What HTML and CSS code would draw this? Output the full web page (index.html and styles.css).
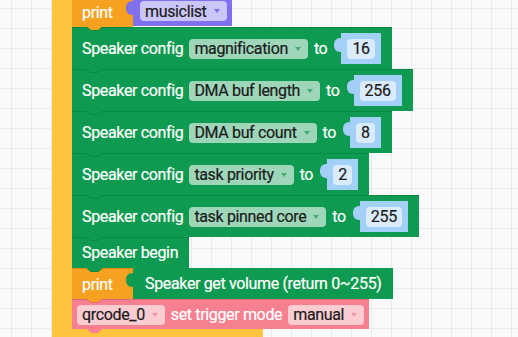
FILE: index.html
```html
<!DOCTYPE html>
<html lang="en">
<head>
  <meta charset="UTF-8">
  <meta name="viewport" content="width=device-width, initial-scale=1.0">
  <title>Speaker blocks</title>
  <link rel="stylesheet" href="styles.css">
</head>
<body>
  <div class="workspace">
    <div class="c-block">
      <div class="c-stack">
        <!-- print musiclist -->
        <div class="row">
          <div class="block stmt print">print</div>
          <div class="block value purple">
            <span class="dropdown">musiclist<i class="arrow"></i></span>
          </div>
        </div>

        <div class="block stmt speaker">
          <span class="label">Speaker config</span>
          <span class="dropdown">magnification<i class="arrow"></i></span>
          <span class="label">to</span>
          <span class="block value num"><span class="field">16</span></span>
        </div>
        <div class="block stmt speaker">
          <span class="label">Speaker config</span>
          <span class="dropdown">DMA buf length<i class="arrow"></i></span>
          <span class="label">to</span>
          <span class="block value num"><span class="field">256</span></span>
        </div>
        <div class="block stmt speaker">
          <span class="label">Speaker config</span>
          <span class="dropdown">DMA buf count<i class="arrow"></i></span>
          <span class="label">to</span>
          <span class="block value num"><span class="field">8</span></span>
        </div>
        <div class="block stmt speaker">
          <span class="label">Speaker config</span>
          <span class="dropdown">task priority<i class="arrow"></i></span>
          <span class="label">to</span>
          <span class="block value num"><span class="field">2</span></span>
        </div>
        <div class="block stmt speaker">
          <span class="label">Speaker config</span>
          <span class="dropdown">task pinned core<i class="arrow"></i></span>
          <span class="label">to</span>
          <span class="block value num"><span class="field">255</span></span>
        </div>

        <div class="block stmt speaker simple">
          <span class="label">Speaker begin</span>
        </div>

        <div class="row">
          <div class="block stmt print">print</div>
          <div class="block value green-value">Speaker get volume (return 0~255)</div>
        </div>

        <div class="block stmt qrcode">
          <span class="dropdown">qrcode_0<i class="arrow"></i></span>
          <span class="label">set trigger mode</span>
          <span class="dropdown">manual<i class="arrow"></i></span>
        </div>
      </div>
      <div class="c-foot"></div>
    </div>
  </div>
</body>
</html>
```

FILE: styles.css
```css
body {
    margin: 0;
    height: 337px;
    overflow: hidden;
    font-family: 'Roboto', 'Liberation Sans', sans-serif;
    font-size: 16px;
    letter-spacing: -0.35px;
    -webkit-text-stroke: 0.2px currentColor;
    background-color: #fafafa;
    background-image:
        linear-gradient(#ebebeb 1px, transparent 1px),
        linear-gradient(90deg, #ebebeb 1px, transparent 1px);
    background-size: 20px 20px;
    background-position: 11px 8px;
}
.c-block {
    margin: -4px 0 0 52px;
    width: max-content;
}
.c-stack {
    border-left: 20px solid #fec43d;
    display: flex;
    flex-direction: column;
    align-items: flex-start;
}
.c-foot {
    width: 211px;
    height: 30px;
    background-color: #fec43d;
}
.row {
    display: flex;
    align-items: flex-start;
}
.block {
    position: relative;
    display: flex;
    align-items: center;
    box-sizing: border-box;
    color: #fff;
    white-space: nowrap;
}
.stmt {
    border-top: 1px solid #0a8945;
}
/* tab under a statement block */
.stmt::after {
    content: '';
    position: absolute;
    left: 15px;
    bottom: -4px;
    width: 15px;
    height: 4px;
    background: inherit;
    clip-path: polygon(0 0, 100% 0, 73% 100%, 27% 100%);
    z-index: 2;
}
/* notch outline on top of a statement block */
.stmt::before {
    content: '';
    position: absolute;
    left: 15px;
    top: -1px;
    width: 15px;
    height: 4px;
    background: #0a8945;
    clip-path: polygon(0 0, 27% 75%, 73% 75%, 100% 0, 100% 25%, 73% 100%, 27% 100%, 0 25%);
    z-index: 3;
}
.c-stack > .row:first-child .stmt::before {
    display: none;
}
.print {
    background-color: #f7a120;
    border-top-color: #d98a14;
    width: 61px;
    height: 31px;
    padding-left: 10px;
}
.speaker {
    background-color: #0e9a50;
    height: 42px;
    padding: 0 11px 0 10px;
    gap: 6px;
}
.simple {
    height: 31px;
}
.qrcode {
    background-color: #f6808f;
    border-top-color: #e06a7a;
    height: 30px;
    padding: 0 5px;
    gap: 6px;
}
.qrcode::before {
    background: #e06a7a;
}
.label {
    line-height: 20px;
}
.dropdown {
    display: inline-flex;
    align-items: center;
    height: 20px;
    padding: 0 7px 0 5px;
    border-radius: 4px;
    background-color: rgba(255, 255, 255, 0.6);
    color: #1b1b1b;
}
.arrow {
    display: inline-block;
    margin-left: 7px;
    border-left: 3px solid transparent;
    border-right: 3px solid transparent;
    border-top: 4px solid #3fae72;
}
.qrcode .arrow {
    border-top-color: #f596a3;
}
.purple .arrow {
    border-top-color: #7e70ee;
}
/* value blocks with the puzzle knob on the left */
.value::before {
    content: '';
    position: absolute;
    left: -7px;
    top: 5px;
    width: 8px;
    height: 14px;
    background: inherit;
    border-radius: 6px 0 0 6px;
}
.purple {
    background-color: #7e70ee;
    height: 30px;
    padding: 0 5px 0 7px;
}
.num {
    background-color: #a2d0f6;
    height: 31px;
    padding: 0 6px;
    margin-left: 8px;
    color: #1b1b1b;
}
.field {
    display: inline-flex;
    align-items: center;
    height: 20px;
    padding: 0 5px;
    border-radius: 4px;
    background-color: rgba(255, 255, 255, 0.6);
}
.green-value {
    background-color: #0e9a50;
    height: 31px;
    padding: 0 11px 0 12px;
}
```
